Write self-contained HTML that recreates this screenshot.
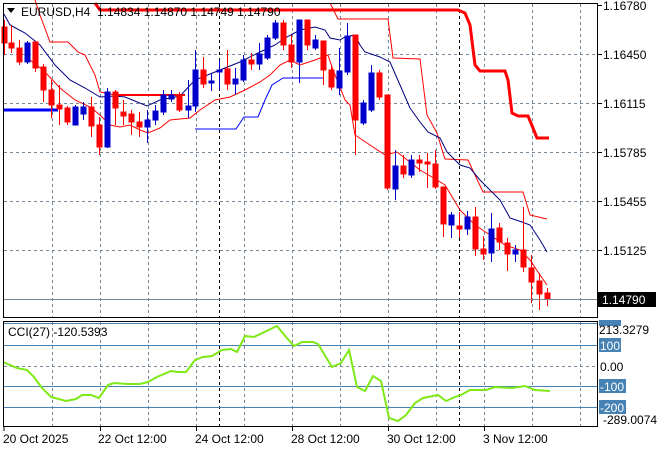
<!DOCTYPE html>
<html><head><meta charset="utf-8"><style>
html,body{margin:0;padding:0;background:#fff;}
svg{display:block;font-family:"Liberation Sans",sans-serif;}
</style></head><body>
<svg width="660" height="450" viewBox="0 0 660 450" xmlns="http://www.w3.org/2000/svg">
<rect width="660" height="450" fill="#fff"/>
<g stroke="#778899" stroke-width="1" stroke-dasharray="3,3" fill="none">
<line x1="52.5" y1="4" x2="52.5" y2="317"/><line x1="100.5" y1="4" x2="100.5" y2="317"/><line x1="148.5" y1="4" x2="148.5" y2="317"/><line x1="196.5" y1="4" x2="196.5" y2="317"/><line x1="244.5" y1="4" x2="244.5" y2="317"/><line x1="292.5" y1="4" x2="292.5" y2="317"/><line x1="340.5" y1="4" x2="340.5" y2="317"/><line x1="388.5" y1="4" x2="388.5" y2="317"/><line x1="436.5" y1="4" x2="436.5" y2="317"/><line x1="484.5" y1="4" x2="484.5" y2="317"/><line x1="532.5" y1="4" x2="532.5" y2="317"/><line x1="580.5" y1="4" x2="580.5" y2="317"/>
<line x1="4" y1="54.5" x2="597" y2="54.5"/><line x1="4" y1="103.5" x2="597" y2="103.5"/><line x1="4" y1="152.5" x2="597" y2="152.5"/><line x1="4" y1="201.5" x2="597" y2="201.5"/><line x1="4" y1="250.5" x2="597" y2="250.5"/>
<line x1="52.5" y1="322" x2="52.5" y2="426"/><line x1="100.5" y1="322" x2="100.5" y2="426"/><line x1="148.5" y1="322" x2="148.5" y2="426"/><line x1="196.5" y1="322" x2="196.5" y2="426"/><line x1="244.5" y1="322" x2="244.5" y2="426"/><line x1="292.5" y1="322" x2="292.5" y2="426"/><line x1="340.5" y1="322" x2="340.5" y2="426"/><line x1="388.5" y1="322" x2="388.5" y2="426"/><line x1="436.5" y1="322" x2="436.5" y2="426"/><line x1="484.5" y1="322" x2="484.5" y2="426"/><line x1="532.5" y1="322" x2="532.5" y2="426"/><line x1="580.5" y1="322" x2="580.5" y2="426"/>
<line x1="4" y1="366.5" x2="597" y2="366.5"/>
</g>
<g stroke="#000" stroke-dasharray="3,3"><line x1="219.5" y1="4" x2="219.5" y2="317"/><line x1="459.5" y1="4" x2="459.5" y2="317"/><line x1="219.5" y1="322" x2="219.5" y2="426"/><line x1="459.5" y1="322" x2="459.5" y2="426"/></g>
<g stroke="#4682b4" stroke-width="1"><line x1="4" y1="323.5" x2="597" y2="323.5"/><line x1="4" y1="345.5" x2="597" y2="345.5"/><line x1="4" y1="386.5" x2="597" y2="386.5"/><line x1="4" y1="407.5" x2="597" y2="407.5"/></g>

<polyline fill="none" stroke="#ff0000" stroke-width="1" points="35,0 40,15 50,42 68,42 78,52 85,55 95,75 100,92 115,95"/>
<polyline fill="none" stroke="#ff0000" stroke-width="2" points="118,95 185,95"/>
<polyline fill="none" stroke="#ff0000" stroke-width="3" points="95,3 100,10 458,10 465,13 470,25 475,65 480,71 505,71 508,80 512,113 518,116 528,116 533,128 537,138 549,138"/>
<polyline fill="none" stroke="#ff0000" stroke-width="1" points="330,3 338,19 388,19 393,58 420,59 427,115 437,133 443,153 445,159 468,160 483,192 523,192 530,215 547,219"/>
<polyline fill="none" stroke="#ff0000" stroke-width="1" points="30,60 43,70 60,88 75,100 90,107 100,115 110,125 120,127 130,125 140,130 148,133 160,128 170,120 190,118 200,110 215,100 230,97 245,90 260,82 270,75 280,65 290,60 300,65 315,60 328,55 333,70 340,87 345,100 350,105 355,135 370,145 385,155 397,152 420,170 437,180 445,185 460,210 475,225 490,235 505,245 520,250 530,260 540,275 547,285"/>
<polyline fill="none" stroke="#000080" stroke-width="1" points="4,14 10,25 25,33 40,45 55,65 70,80 85,88 100,97 115,96 125,97 147,106 160,100 180,96 195,80 215,72 240,62 260,52 275,45 285,38 300,30 315,27 325,30 330,38 340,40 345,37 355,35 360,45 365,52 380,57 390,62 400,85 410,108 420,122 428,132 440,138 447,152 460,165 470,168 480,180 500,200 510,218 522,222 530,225 540,240 547,252"/>
<polyline fill="none" stroke="#0000ff" stroke-width="3" points="4,110 58,110"/>
<polyline fill="none" stroke="#0000ff" stroke-width="1" points="195,129 236,129 244,117 258,117 265,100 272,85 283,78 323,78"/>

<g stroke="#ff0000" fill="#ff0000">
<line x1="4.5" y1="20" x2="4.5" y2="55"/><rect x="2" y="27" width="5" height="16"/>
<line x1="11.5" y1="25" x2="11.5" y2="53"/><rect x="9" y="43" width="5" height="5"/>
<line x1="19.5" y1="40" x2="19.5" y2="65"/><rect x="17" y="48" width="5" height="14"/>
<line x1="35.5" y1="42" x2="35.5" y2="72"/><rect x="33" y="42" width="5" height="26"/>
<line x1="43.5" y1="64" x2="43.5" y2="102"/><rect x="41" y="67" width="5" height="23"/>
<line x1="51.5" y1="80" x2="51.5" y2="118"/><rect x="49" y="90" width="5" height="15"/>
<line x1="59.5" y1="85" x2="59.5" y2="125"/><rect x="57" y="105" width="5" height="4"/>
<line x1="67.5" y1="106" x2="67.5" y2="125"/><rect x="65" y="108" width="5" height="14"/>
<line x1="91.5" y1="97" x2="91.5" y2="137"/><rect x="89" y="107" width="5" height="19"/>
<line x1="99.5" y1="117" x2="99.5" y2="155"/><rect x="97" y="125" width="5" height="22"/>
<line x1="115.5" y1="90" x2="115.5" y2="125"/><rect x="113" y="92" width="5" height="16"/>
<line x1="123.5" y1="100" x2="123.5" y2="125"/><rect x="121" y="112" width="5" height="4"/>
<line x1="131.5" y1="110" x2="131.5" y2="135"/><rect x="129" y="114" width="5" height="8"/>
<line x1="139.5" y1="112" x2="139.5" y2="137"/><rect x="137" y="122" width="5" height="5"/>
<line x1="179.5" y1="92" x2="179.5" y2="112"/><rect x="177" y="95" width="5" height="15"/>
<line x1="203.5" y1="57" x2="203.5" y2="88"/><rect x="201" y="70" width="5" height="14"/>
<line x1="227.5" y1="50" x2="227.5" y2="90"/><rect x="225" y="69" width="5" height="15"/>
<line x1="251.5" y1="53" x2="251.5" y2="70"/><rect x="249" y="60" width="5" height="4"/>
<line x1="283.5" y1="20" x2="283.5" y2="50"/><rect x="281" y="23" width="5" height="22"/>
<line x1="291.5" y1="35" x2="291.5" y2="68"/><rect x="289" y="45" width="5" height="17"/>
<line x1="307.5" y1="20" x2="307.5" y2="50"/><rect x="305" y="20" width="5" height="25"/>
<line x1="323.5" y1="41" x2="323.5" y2="85"/><rect x="321" y="41" width="5" height="29"/>
<line x1="331.5" y1="65" x2="331.5" y2="90"/><rect x="329" y="70" width="5" height="17"/>
<line x1="355.5" y1="35" x2="355.5" y2="155"/><rect x="353" y="35" width="5" height="85"/>
<line x1="379.5" y1="70" x2="379.5" y2="100"/><rect x="377" y="73" width="5" height="24"/>
<line x1="387.5" y1="95" x2="387.5" y2="190"/><rect x="385" y="95" width="5" height="93"/>
<line x1="403.5" y1="155" x2="403.5" y2="178"/><rect x="401" y="166" width="5" height="8"/>
<line x1="419.5" y1="155" x2="419.5" y2="172"/><rect x="417" y="160" width="5" height="3"/>
<line x1="427.5" y1="153" x2="427.5" y2="188"/><rect x="425" y="162" width="5" height="2"/>
<line x1="435.5" y1="150" x2="435.5" y2="189"/><rect x="433" y="164" width="5" height="23"/>
<line x1="443.5" y1="187" x2="443.5" y2="237"/><rect x="441" y="187" width="5" height="37"/>
<line x1="459.5" y1="212" x2="459.5" y2="238"/><rect x="457" y="226" width="5" height="3"/>
<line x1="475.5" y1="207" x2="475.5" y2="256"/><rect x="473" y="217" width="5" height="32"/>
<line x1="483.5" y1="236" x2="483.5" y2="260"/><rect x="481" y="249" width="5" height="5"/>
<line x1="499.5" y1="223" x2="499.5" y2="250"/><rect x="497" y="228" width="5" height="14"/>
<line x1="507.5" y1="238" x2="507.5" y2="271"/><rect x="505" y="243" width="5" height="11"/>
<line x1="523.5" y1="207" x2="523.5" y2="272"/><rect x="521" y="250" width="5" height="17"/>
<line x1="531.5" y1="255" x2="531.5" y2="303"/><rect x="529" y="268" width="5" height="14"/>
<line x1="539.5" y1="273" x2="539.5" y2="310"/><rect x="537" y="281" width="5" height="13"/>
<line x1="547.5" y1="288" x2="547.5" y2="306"/><rect x="545" y="293" width="5" height="6"/>
</g>
<g stroke="#0000cd" fill="#0000cd">
<line x1="27.5" y1="41" x2="27.5" y2="64"/><rect x="25" y="43" width="5" height="19"/>
<line x1="75.5" y1="105" x2="75.5" y2="125"/><rect x="73" y="107" width="5" height="18"/>
<line x1="83.5" y1="102" x2="83.5" y2="120"/><rect x="81" y="107" width="5" height="7"/>
<line x1="107.5" y1="88" x2="107.5" y2="148"/><rect x="105" y="92" width="5" height="55"/>
<line x1="147.5" y1="110" x2="147.5" y2="143"/><rect x="145" y="120" width="5" height="7"/>
<line x1="155.5" y1="105" x2="155.5" y2="125"/><rect x="153" y="111" width="5" height="9"/>
<line x1="163.5" y1="90" x2="163.5" y2="115"/><rect x="161" y="95" width="5" height="17"/>
<line x1="171.5" y1="90" x2="171.5" y2="102"/><rect x="169" y="95" width="5" height="4"/>
<line x1="188.5" y1="80" x2="188.5" y2="118"/><rect x="186" y="106" width="5" height="4"/>
<line x1="195.5" y1="50" x2="195.5" y2="112"/><rect x="193" y="70" width="5" height="36"/>
<line x1="211.5" y1="73" x2="211.5" y2="91"/><rect x="209" y="81" width="5" height="2"/>
<line x1="219.5" y1="60" x2="219.5" y2="90"/><rect x="217" y="70" width="5" height="2"/>
<line x1="235.5" y1="68" x2="235.5" y2="95"/><rect x="233" y="79" width="5" height="5"/>
<line x1="243.5" y1="55" x2="243.5" y2="82"/><rect x="241" y="60" width="5" height="20"/>
<line x1="259.5" y1="43" x2="259.5" y2="70"/><rect x="257" y="54" width="5" height="10"/>
<line x1="267.5" y1="35" x2="267.5" y2="60"/><rect x="265" y="38" width="5" height="20"/>
<line x1="275.5" y1="20" x2="275.5" y2="40"/><rect x="273" y="23" width="5" height="15"/>
<line x1="299.5" y1="20" x2="299.5" y2="83"/><rect x="297" y="20" width="5" height="42"/>
<line x1="315.5" y1="35" x2="315.5" y2="50"/><rect x="313" y="40" width="5" height="8"/>
<line x1="339.5" y1="48" x2="339.5" y2="95"/><rect x="337" y="71" width="5" height="17"/>
<line x1="347.5" y1="23" x2="347.5" y2="75"/><rect x="345" y="36" width="5" height="36"/>
<line x1="363.5" y1="100" x2="363.5" y2="125"/><rect x="361" y="103" width="5" height="20"/>
<line x1="371.5" y1="65" x2="371.5" y2="112"/><rect x="369" y="73" width="5" height="37"/>
<line x1="395.5" y1="150" x2="395.5" y2="200"/><rect x="393" y="166" width="5" height="23"/>
<line x1="411.5" y1="155" x2="411.5" y2="178"/><rect x="409" y="160" width="5" height="15"/>
<line x1="451.5" y1="212" x2="451.5" y2="238"/><rect x="449" y="215" width="5" height="10"/>
<line x1="467.5" y1="211" x2="467.5" y2="235"/><rect x="465" y="217" width="5" height="12"/>
<line x1="491.5" y1="213" x2="491.5" y2="262"/><rect x="489" y="229" width="5" height="24"/>
<line x1="515.5" y1="245" x2="515.5" y2="262"/><rect x="513" y="250" width="5" height="4"/>
</g>

<line x1="4" y1="299.5" x2="597" y2="299.5" stroke="#778899" stroke-width="1"/>
<polyline fill="none" stroke="#7fe817" stroke-width="2" points="3,362 17,368 27,370 34,377 42,388 51,397 66,401 76,399 82,395 91,395 99,398 108,385 114,383 127,384 140,384 148,382 157,377 171,371 178,372 186,372 195,360 203,357 212,356 222,350 231,349 237,352 245,336 254,337 277,326 286,337 294,346 302,342 313,342 318,344 332,367 341,363 349,350 357,387 365,391 373,376 381,381 389,418 398,421 406,415 415,403 423,398 438,395 446,401 455,397 461,395 470,390 486,390 495,387 512,388 525,386 535,390 550,391"/>

<rect x="3.5" y="3.5" width="594" height="314" fill="none" stroke="#000"/>
<rect x="3.5" y="321.5" width="594" height="105" fill="none" stroke="#000"/>
<g stroke="#000"><line x1="4" y1="427" x2="4" y2="431"/><line x1="100.5" y1="427" x2="100.5" y2="431"/><line x1="196.5" y1="427" x2="196.5" y2="431"/><line x1="292.5" y1="427" x2="292.5" y2="431"/><line x1="388.5" y1="427" x2="388.5" y2="431"/><line x1="484.5" y1="427" x2="484.5" y2="431"/>
<line x1="598" y1="5.5" x2="602" y2="5.5"/><line x1="598" y1="54.5" x2="602" y2="54.5"/><line x1="598" y1="103.5" x2="602" y2="103.5"/><line x1="598" y1="152.5" x2="602" y2="152.5"/><line x1="598" y1="201.5" x2="602" y2="201.5"/><line x1="598" y1="250.5" x2="602" y2="250.5"/></g>

<polygon points="7,8 15,8 11,13" fill="#000"/>
<text x="21" y="16" font-size="12" fill="#000">EURUSD,H4&#160;&#160;1.14834&#160;1.14870&#160;1.14749&#160;1.14790</text>
<text x="8" y="336" font-size="12" fill="#000">CCI(27)&#160;-120.5393</text>

<g font-size="12" fill="#000">
<text x="603" y="10">1.16780</text><text x="603" y="59">1.16450</text><text x="603" y="108">1.16115</text><text x="603" y="157">1.15785</text><text x="603" y="206">1.15455</text><text x="603" y="255">1.15125</text>
</g>
<rect x="598" y="292" width="58" height="15" fill="#000"/>
<text x="602" y="304" font-size="12" fill="#fff">1.14790</text>

<g font-size="12">
<rect x="599" y="320" width="22" height="6" fill="#4682b4"/>
<text x="599" y="334" fill="#000">213.3279</text>
<rect x="599" y="338" width="22" height="14" fill="#4682b4"/><text x="600" y="350" fill="#fff">100</text>
<text x="600" y="371" fill="#000">0.00</text>
<rect x="599" y="379" width="27" height="14" fill="#4682b4"/><text x="600" y="391" fill="#fff">-100</text>
<rect x="599" y="400" width="27" height="14" fill="#4682b4"/><text x="600" y="412" fill="#fff">-200</text>
<text x="603" y="424" fill="#000">-289.0074</text>
</g>

<g font-size="12" fill="#000">
<text x="3" y="443">20 Oct 2025</text><text x="98" y="443">22 Oct 12:00</text><text x="195" y="443">24 Oct 12:00</text><text x="291" y="443">28 Oct 12:00</text><text x="387" y="443">30 Oct 12:00</text><text x="483" y="443">3 Nov 12:00</text>
</g>
</svg>
</body></html>
